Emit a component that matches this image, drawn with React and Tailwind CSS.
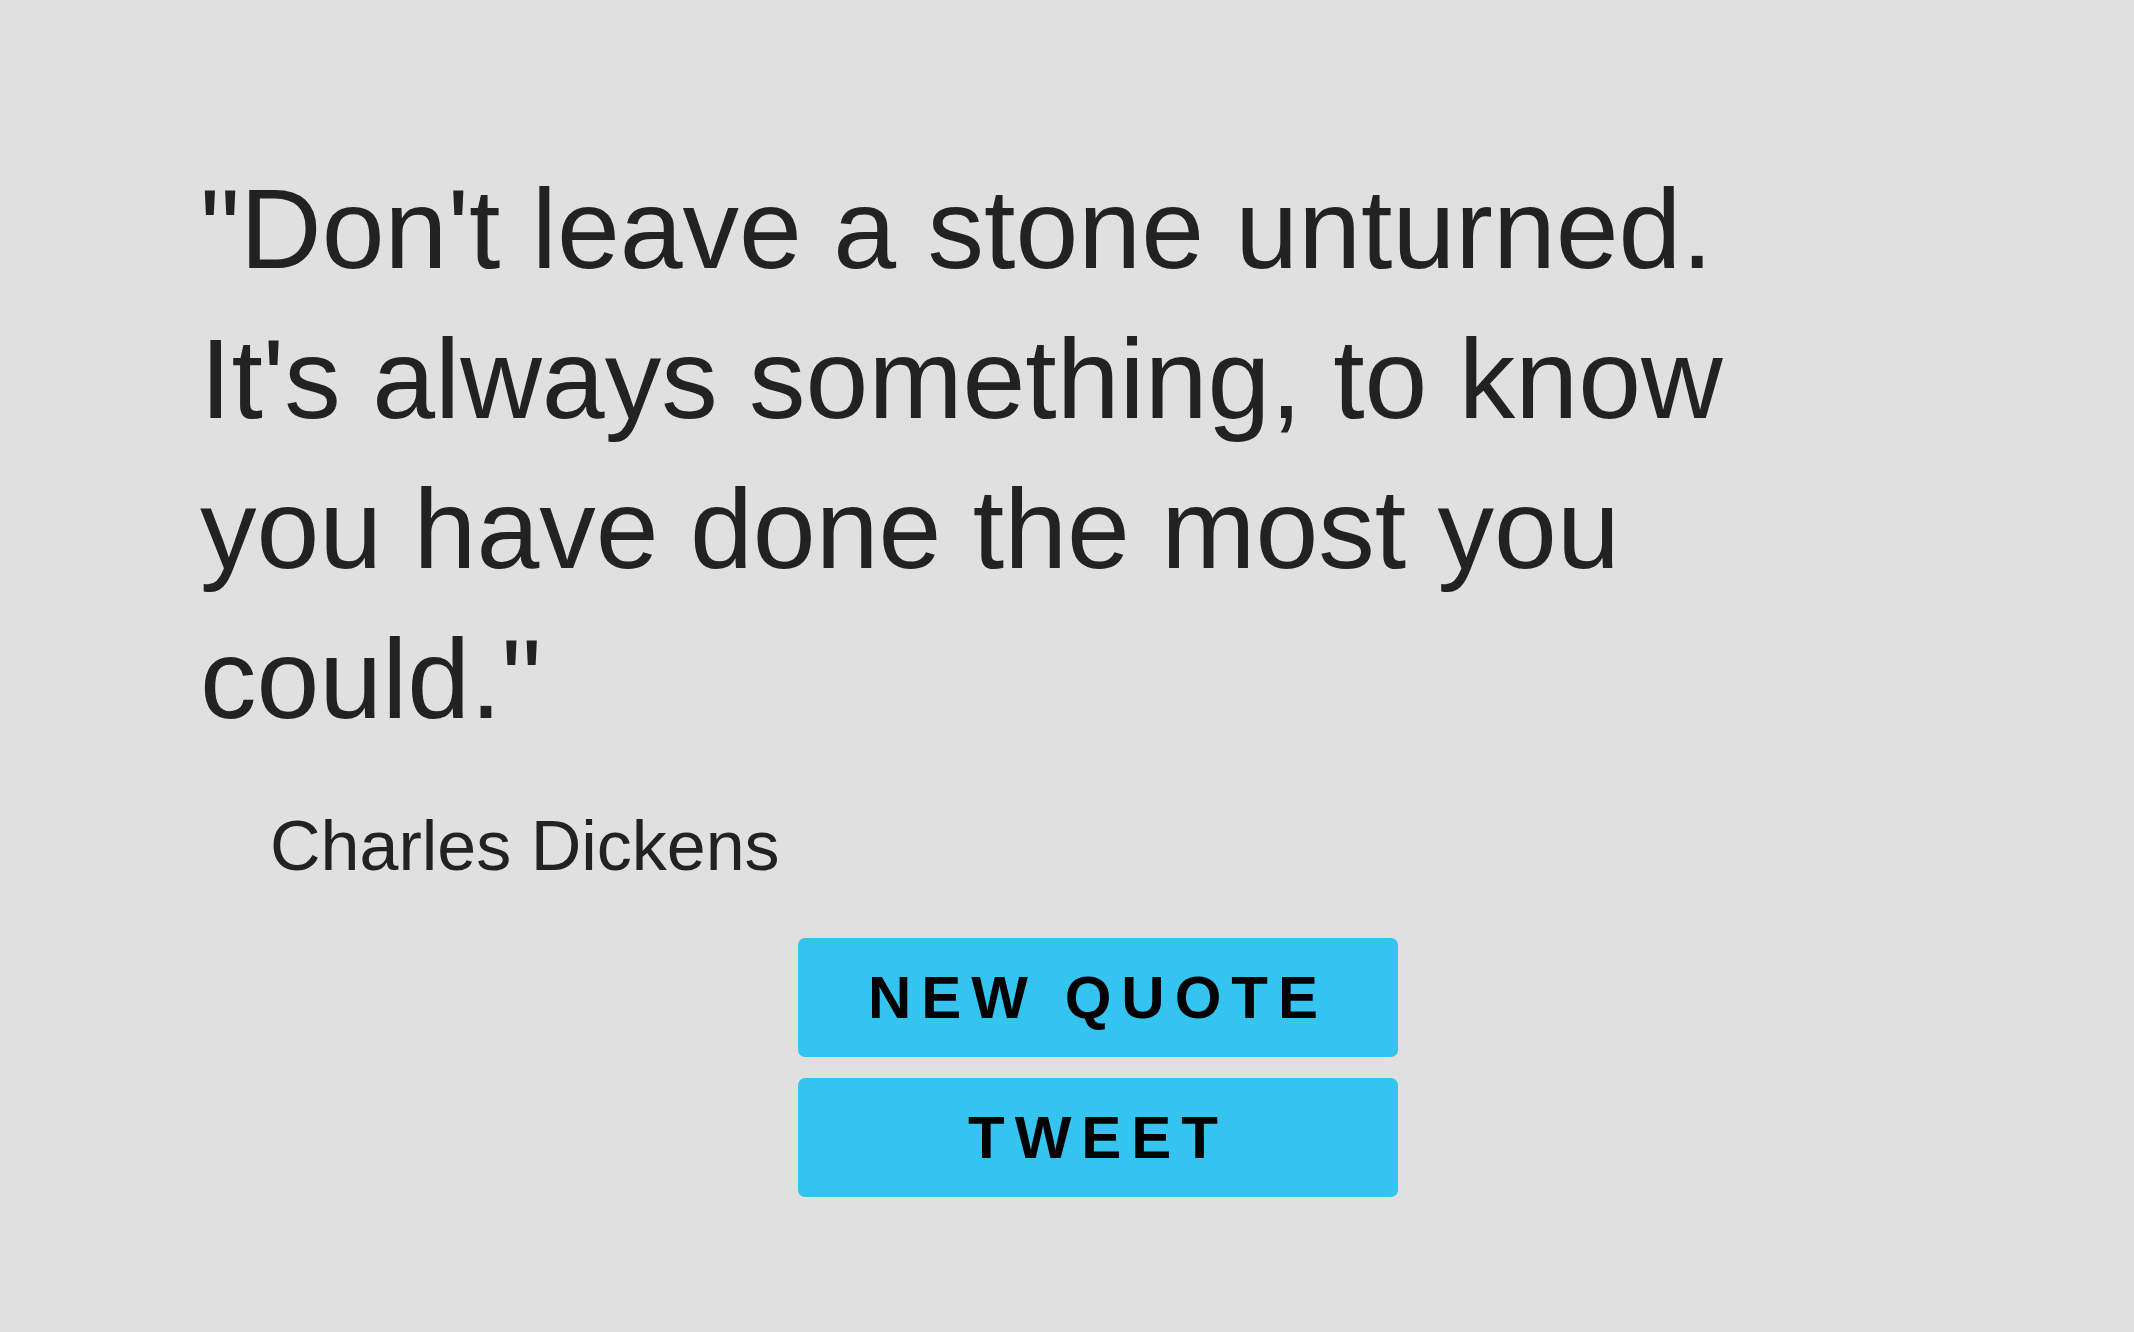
export default function App() {
  return (
    <div className="min-h-[1332px] w-full bg-[#e0e0e0] text-[#222222]" style={{ fontFamily: '"Liberation Sans", Arial, Helvetica, sans-serif' }}>
      <div className="ml-[200px] w-[1796px] pt-[154px] flex flex-col">
        <p className="w-[1620px] text-[113px] leading-[150px]">
          "Don't leave a stone unturned. It's always something, to know you have done the most you could."
        </p>
        <p className="mt-[52px] ml-[70px] text-[70px] leading-[80px]">Charles Dickens</p>
        <div className="mt-[52px] flex flex-col items-center gap-[21px]">
          <button className="w-[600px] h-[119px] rounded-[7px] bg-[#35c3f0] text-black font-bold text-[60px] tracking-[10px] flex items-center justify-center">
            NEW QUOTE
          </button>
          <button className="w-[600px] h-[119px] rounded-[7px] bg-[#35c3f0] text-black font-bold text-[60px] tracking-[10px] flex items-center justify-center">
            TWEET
          </button>
        </div>
      </div>
    </div>
  );
}
